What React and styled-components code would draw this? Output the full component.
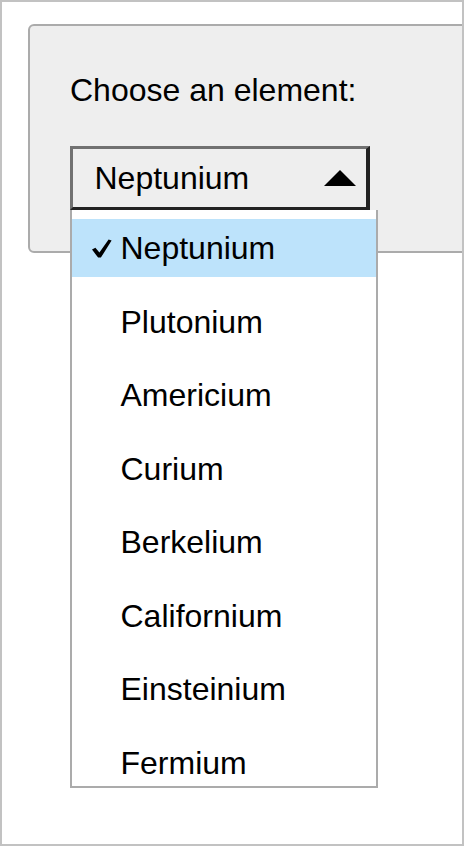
import React from 'react';
import styled, { createGlobalStyle } from 'styled-components';

const GlobalStyle = createGlobalStyle`
  html, body {
    margin: 0;
    padding: 0;
    background: #fff;
  }
  body {
    font-family: "Liberation Sans", Arial, sans-serif;
    color: #000;
  }
`;

const Frame = styled.div`
  box-sizing: border-box;
  width: 464px;
  height: 846px;
  border: 2px solid #c2c2c2;
  overflow: hidden;
  background: #fff;
  padding: 22px 0 0 26px;
`;

const Panel = styled.div`
  box-sizing: border-box;
  width: 480px;
  background: #eeeeee;
  border: 2px solid #ababab;
  border-radius: 6px;
  padding: 46px 0 41px 40px;
`;

const Label = styled.div`
  font-size: 32px;
  line-height: 37px;
  margin-bottom: 37px;
`;

const SelectWrap = styled.div`
  position: relative;
  width: 300px;
`;

const SelectBox = styled.div`
  box-sizing: border-box;
  display: flex;
  align-items: center;
  justify-content: space-between;
  height: 64px;
  border-style: solid;
  border-width: 3px 4px 3px 3px;
  border-color: #717171 #222 #222 #717171;
  padding: 0 10px 0 21.5px;
  font-size: 32px;
  line-height: 58px;
`;

const Arrow = styled.svg`
  width: 32px;
  height: 16px;
  display: block;
  margin-bottom: 1px;
`;

const List = styled.ul`
  position: absolute;
  top: 100%;
  left: 0;
  z-index: 2;
  box-sizing: border-box;
  width: 308px;
  height: 578px;
  margin: 0;
  padding: 9px 0 0;
  list-style: none;
  background: #fff;
  border: 2px solid #ababab;
  border-top: none;
  overflow: hidden;
`;

const Item = styled.li`
  display: flex;
  align-items: center;
  height: 58px;
  margin-bottom: 15.5px;
  padding-left: 19px;
  font-size: 32px;
  line-height: 58px;
  white-space: nowrap;
  background: ${props => (props.selected ? '#bde3fb' : 'transparent')};
`;

const CheckSlot = styled.span`
  display: flex;
  width: 29.5px;
  height: 58px;
  align-items: center;
`;

const Check = styled.svg`
  width: 21px;
  height: 19px;
  display: block;
  margin-top: 1px;
`;

const elements = [
  'Neptunium',
  'Plutonium',
  'Americium',
  'Curium',
  'Berkelium',
  'Californium',
  'Einsteinium',
  'Fermium',
];

export default function App() {
  const selected = 'Neptunium';
  return (
    <>
      <GlobalStyle />
      <Frame>
        <Panel>
          <Label>Choose an element:</Label>
          <SelectWrap>
            <SelectBox>
              <span>{selected}</span>
              <Arrow viewBox="0 0 32 16">
                <polygon points="16,0 32,16 0,16" fill="#000" />
              </Arrow>
            </SelectBox>
            <List>
              {elements.map(name => (
                <Item key={name} selected={name === selected}>
                  <CheckSlot>
                    {name === selected && (
                      <Check viewBox="0 0 21 19">
                        <path
                          d="M1 10.6 L4.4 8.8 L8.4 13.4 L17.6 0.6 L20.6 1.4 L9.9 18.6 L7.1 18.6 Z"
                          fill="#000"
                        />
                      </Check>
                    )}
                  </CheckSlot>
                  {name}
                </Item>
              ))}
            </List>
          </SelectWrap>
        </Panel>
      </Frame>
    </>
  );
}
